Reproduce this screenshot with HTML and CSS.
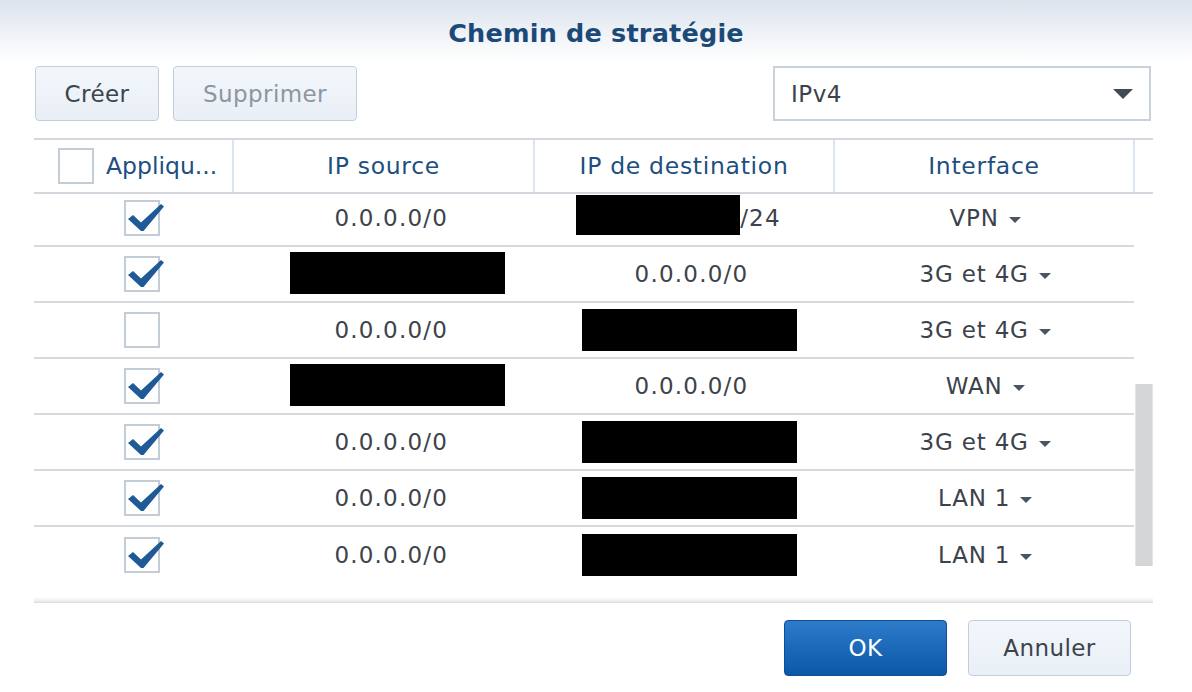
FILE: index.html
```html
<!DOCTYPE html>
<html lang="fr">
<head>
<meta charset="utf-8">
<title>Chemin de stratégie</title>
<link rel="stylesheet" href="styles.css">
</head>
<body>
<div class="dialog">
  <div class="titlebar"><h1 class="title">Chemin de stratégie</h1></div>

  <div class="toolbar">
    <button class="btn btn-create">Créer</button>
    <button class="btn btn-disabled">Supprimer</button>
    <div class="select">
      <span class="select-value">IPv4</span>
      <span class="select-caret"></span>
    </div>
  </div>

  <div class="grid">
    <div class="thead">
      <div class="th th-check"><span class="cb"></span><span class="th-label">Appliqu...</span></div>
      <div class="th c2">IP source</div>
      <div class="th c3">IP de destination</div>
      <div class="th c4">Interface</div>
    </div>

    <div class="tbody">
      <div class="rows">
        <div class="row">
          <div class="td td-check"><span class="cb"><svg class="tick" viewBox="0 0 36 27"><path d="M0 15 L5 11 L13 18.5 L33 0 L36 2.5 L15.5 27 L13 27 Z"/></svg></span></div>
          <div class="td c2">0.0.0.0/0</div>
          <div class="td c3"><span class="redact r-small"></span>/24</div>
          <div class="td c4">VPN<span class="caret"></span></div>
        </div>
        <div class="row">
          <div class="td td-check"><span class="cb"><svg class="tick" viewBox="0 0 36 27"><path d="M0 15 L5 11 L13 18.5 L33 0 L36 2.5 L15.5 27 L13 27 Z"/></svg></span></div>
          <div class="td c2"><span class="redact r-src"></span></div>
          <div class="td c3">0.0.0.0/0</div>
          <div class="td c4">3G et 4G<span class="caret"></span></div>
        </div>
        <div class="row">
          <div class="td td-check"><span class="cb"></span></div>
          <div class="td c2">0.0.0.0/0</div>
          <div class="td c3"><span class="redact r-dst"></span></div>
          <div class="td c4">3G et 4G<span class="caret"></span></div>
        </div>
        <div class="row">
          <div class="td td-check"><span class="cb"><svg class="tick" viewBox="0 0 36 27"><path d="M0 15 L5 11 L13 18.5 L33 0 L36 2.5 L15.5 27 L13 27 Z"/></svg></span></div>
          <div class="td c2"><span class="redact r-src"></span></div>
          <div class="td c3">0.0.0.0/0</div>
          <div class="td c4">WAN<span class="caret"></span></div>
        </div>
        <div class="row">
          <div class="td td-check"><span class="cb"><svg class="tick" viewBox="0 0 36 27"><path d="M0 15 L5 11 L13 18.5 L33 0 L36 2.5 L15.5 27 L13 27 Z"/></svg></span></div>
          <div class="td c2">0.0.0.0/0</div>
          <div class="td c3"><span class="redact r-dst"></span></div>
          <div class="td c4">3G et 4G<span class="caret"></span></div>
        </div>
        <div class="row">
          <div class="td td-check"><span class="cb"><svg class="tick" viewBox="0 0 36 27"><path d="M0 15 L5 11 L13 18.5 L33 0 L36 2.5 L15.5 27 L13 27 Z"/></svg></span></div>
          <div class="td c2">0.0.0.0/0</div>
          <div class="td c3"><span class="redact r-dst"></span></div>
          <div class="td c4">LAN 1<span class="caret"></span></div>
        </div>
        <div class="row">
          <div class="td td-check"><span class="cb"><svg class="tick" viewBox="0 0 36 27"><path d="M0 15 L5 11 L13 18.5 L33 0 L36 2.5 L15.5 27 L13 27 Z"/></svg></span></div>
          <div class="td c2">0.0.0.0/0</div>
          <div class="td c3"><span class="redact r-dst"></span></div>
          <div class="td c4">LAN 1<span class="caret"></span></div>
        </div>
      </div>
      <div class="scroll-thumb"></div>
    </div>
    <div class="grid-bottom"></div>
  </div>

  <div class="footer">
    <button class="btn btn-big btn-primary">OK</button>
    <button class="btn btn-big">Annuler</button>
  </div>
</div>
</body>
</html>
```

FILE: styles.css
```css
* { box-sizing: border-box; }

html, body {
  margin: 0;
  padding: 0;
  background: #ffffff;
}

body {
  width: 1192px;
  height: 692px;
  overflow: hidden;
  font-family: "DejaVu Sans", Verdana, sans-serif;
  font-size: 23px;
  color: #3c434a;
}

.titlebar {
  height: 66px;
  display: flex;
  align-items: center;
  justify-content: center;
  background: linear-gradient(to bottom, #dbe3ed 0px, #eef2f7 32px, #ffffff 62px);
}

.title {
  margin: 0;
  font-size: 25.5px;
  font-weight: bold;
  letter-spacing: 0.2px;
  color: #1c4a78;
}

.toolbar {
  display: flex;
  align-items: stretch;
  gap: 14px;
  height: 55px;
  padding: 0 41px 0 35px;
}

.btn {
  font-family: inherit;
  font-size: 23px;
  letter-spacing: 0.4px;
  color: #3b444d;
  background: linear-gradient(to bottom, #f3f7fc, #e9eff6);
  border: 1.5px solid #c3cedb;
  border-radius: 4px;
  padding: 0;
  height: 55px;
  cursor: default;
}

.btn-create {
  width: 124px;
}

.btn-disabled {
  width: 184px;
  color: #8d969f;
}

.select {
  margin-left: auto;
  width: 378px;
  display: flex;
  align-items: center;
  justify-content: space-between;
  border: 2px solid #c9d2db;
  background: #ffffff;
  padding: 0 16px 0 16px;
}

.select-value {
  color: #3c434a;
  letter-spacing: 0.5px;
}

.select-caret {
  width: 0;
  height: 0;
  border-left: 10px solid transparent;
  border-right: 10px solid transparent;
  border-top: 10px solid #3f4a54;
}

.grid {
  margin: 17px 39px 0 34px;
}

.thead {
  display: flex;
  height: 56px;
  border-top: 2px solid #d3d8de;
  border-bottom: 2px solid #d3d8de;
}

.th {
  display: flex;
  align-items: center;
  justify-content: center;
  color: #1d4f80;
  font-size: 23.5px;
  letter-spacing: 0.7px;
  border-right: 2px solid #dbe4ef;
}

.th-check {
  width: 200px;
  justify-content: flex-start;
  padding-left: 24px;
  gap: 12px;
  letter-spacing: 0;
}

.c2 { width: 301px; }
.c3 { width: 300px; }
.c4 { width: 300px; }

.tbody {
  position: relative;
  height: 403px;
  overflow: hidden;
}

.rows {
  margin-top: -3px;
  width: 1100px;
}

.row {
  display: flex;
  height: 56px;
  border-bottom: 2px solid #d6dadf;
}

.row:last-child {
  border-bottom: none;
}

.td {
  display: flex;
  align-items: center;
  justify-content: center;
  letter-spacing: 1.2px;
}

.td-check {
  width: 200px;
  justify-content: flex-start;
  padding-left: 90px;
}

.td.c2, .td.c3 {
  padding-left: 14px;
}

.td.c4 {
  padding-left: 2px;
  letter-spacing: 0.8px;
}

.cb {
  position: relative;
  display: inline-block;
  width: 36px;
  height: 36px;
  border: 2px solid #c4ccd6;
  background: #ffffff;
  flex: none;
}

.tick {
  position: absolute;
  left: 2px;
  top: 2px;
  width: 36px;
  height: 27px;
  overflow: visible;
}

.tick path {
  fill: #1f5a96;
}

.redact {
  display: inline-block;
  background: #000000;
  height: 42px;
}

.r-small {
  width: 164px;
  height: 40px;
  margin-top: -6px;
  margin-left: -26px;
}

.r-src {
  width: 215px;
  margin-left: 12px;
  margin-top: -3px;
}

.r-dst {
  width: 215px;
  margin-left: -4px;
}

.caret {
  display: inline-block;
  width: 0;
  height: 0;
  margin-left: 10px;
  margin-top: 4px;
  border-left: 6px solid transparent;
  border-right: 6px solid transparent;
  border-top: 6px solid #4a5560;
}

.scroll-thumb {
  position: absolute;
  left: 1101px;
  top: 190px;
  width: 18px;
  height: 182px;
  background: #d4d5d7;
  border-left: 1px solid #e4e5e6;
  border-right: 1px solid #e4e5e6;
}

.grid-bottom {
  height: 6px;
  background: linear-gradient(to bottom, rgba(220,220,220,0), #f0f0f0 60%, #dcdcdc);
}

.footer {
  display: flex;
  justify-content: flex-end;
  gap: 21px;
  padding: 17px 61px 0 0;
}

.btn-big {
  width: 163px;
  height: 56px;
}

.btn-primary {
  color: #ffffff;
  background: linear-gradient(to bottom, #2e7acb, #0b58a7);
  border: 1.5px solid #0c4f96;
}
```
